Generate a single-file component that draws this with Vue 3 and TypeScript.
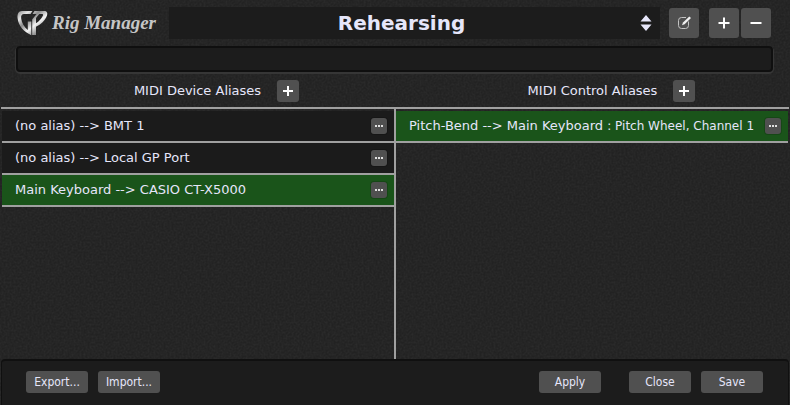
<script setup lang="ts">
import { ref } from 'vue'

interface Alias {
  id: number
  label: string
  detail?: string
}

const rigs: string[] = ['Rehearsing']
const rig = ref<string>('Rehearsing')
const notes = ref<string>('')

const devices = ref<Alias[]>([
  { id: 1, label: '(no alias) --> BMT 1' },
  { id: 2, label: '(no alias) --> Local GP Port' },
  { id: 3, label: 'Main Keyboard --> CASIO CT-X5000' },
])
const controls = ref<Alias[]>([
  { id: 1, label: 'Pitch-Bend --> Main Keyboard', detail: ': Pitch Wheel, Channel 1' },
])

const activeDevice = ref<number>(3)
const activeControl = ref<number>(1)
</script>

<template>
  <main class="window">
    <svg class="grain" aria-hidden="true">
      <filter id="grain">
        <feTurbulence type="fractalNoise" baseFrequency="0.5" numOctaves="2" seed="4" />
        <feColorMatrix type="matrix" values="0 0 0 0 1  0 0 0 0 1  0 0 0 0 1  0.08 0 0 0 -0.025" />
      </filter>
      <rect width="100%" height="100%" filter="url(#grain)" />
    </svg>

    <header class="top">
      <div class="brand">
        <svg class="logo" viewBox="0 0 31 26" aria-hidden="true">
          <defs>
            <linearGradient id="metal" x1="0" y1="0" x2="1" y2="1">
              <stop offset="0" stop-color="#8c8c8c" />
              <stop offset="0.2" stop-color="#e4e4e4" />
              <stop offset="0.38" stop-color="#8c8c8c" />
              <stop offset="0.58" stop-color="#f4f4f4" />
              <stop offset="0.78" stop-color="#8e8e8e" />
              <stop offset="1" stop-color="#c8c8c8" />
            </linearGradient>
          </defs>
          <path
            fill="url(#metal)"
            fill-rule="evenodd"
            d="M15.500 1H5C1.500 1 0 4 0.600 8.500C1.500 16 7 22 14.300 25.200V11.500H10.800V20C7 17 4.800 13 4.200 8.500C3.800 5.500 4.800 4 7 4H13.500ZM17.500 1H27C30 1 31 3 29.800 6C28 10.500 24 14.500 19 16.800V25H15.200V9.500L19.500 4H15.500ZM19 8V13.300C22 11.300 24.500 8.500 26 5.500C26.300 4.600 26 4 25 4H22.200Z"
          />
        </svg>
        <h1 class="name">Rig Manager</h1>
      </div>

      <div class="picker">
        <select v-model="rig" class="rig" aria-label="Rig">
          <option v-for="r in rigs" :key="r" :value="r">{{ r }}</option>
        </select>
        <svg class="arrows" viewBox="0 0 12 16" aria-hidden="true">
          <path d="M6 0L11.500 6.500H0.500ZM6 16L11.500 9.500H0.500Z" />
        </svg>
      </div>

      <button type="button" class="tool" aria-label="Rename rig">
        <svg viewBox="0 0 14 14" aria-hidden="true">
          <path class="thin" d="M9 1.500H4.500Q1.500 1.500 1.500 4.500V9.500Q1.500 12.500 4.500 12.500H8.500Q11.500 12.500 11.500 9.500V5.500" />
          <path class="pen" d="M5 9.200L6 6.600L12.300 0.500L14 2L7.600 8.200Z" />
        </svg>
      </button>
      <div class="pair">
        <button type="button" class="tool" aria-label="Add rig">
          <svg viewBox="0 0 14 14" aria-hidden="true"><path class="bold" d="M7 1.500V12.500M1.500 7H12.500" /></svg>
        </button>
        <button type="button" class="tool" aria-label="Remove rig">
          <svg viewBox="0 0 14 14" aria-hidden="true"><path class="bold" d="M1.500 7H12.500" /></svg>
        </button>
      </div>
    </header>

    <input v-model="notes" class="notes" type="text" aria-label="Rig notes" />

    <div class="heads">
      <div class="head">
        <h2>MIDI Device Aliases</h2>
        <button type="button" class="add" aria-label="Add device alias">
          <svg viewBox="0 0 12 12" aria-hidden="true"><path class="bold" d="M6 1V11M1 6H11" /></svg>
        </button>
      </div>
      <div class="head">
        <h2>MIDI Control Aliases</h2>
        <button type="button" class="add" aria-label="Add control alias">
          <svg viewBox="0 0 12 12" aria-hidden="true"><path class="bold" d="M6 1V11M1 6H11" /></svg>
        </button>
      </div>
    </div>

    <section class="lists">
      <ul class="list">
        <li
          v-for="d in devices"
          :key="d.id"
          class="row"
          :class="{ active: d.id === activeDevice }"
          @click="activeDevice = d.id"
        >
          <span class="label">{{ d.label }}</span>
          <button type="button" class="more" aria-label="Options">
            <svg viewBox="0 0 8 2" aria-hidden="true"><path d="M0 0H2V2H0ZM3 0H5V2H3ZM6 0H8V2H6Z" /></svg>
          </button>
        </li>
      </ul>
      <div class="divider"></div>
      <ul class="list">
        <li
          v-for="c in controls"
          :key="c.id"
          class="row"
          :class="{ active: c.id === activeControl }"
          @click="activeControl = c.id"
        >
          <span class="label">{{ c.label }} <span class="detail">{{ c.detail }}</span></span>
          <button type="button" class="more" aria-label="Options">
            <svg viewBox="0 0 8 2" aria-hidden="true"><path d="M0 0H2V2H0ZM3 0H5V2H3ZM6 0H8V2H6Z" /></svg>
          </button>
        </li>
      </ul>
    </section>

    <footer class="bottom">
      <button type="button" class="action">Export...</button>
      <button type="button" class="action">Import...</button>
      <button type="button" class="action apply">Apply</button>
      <button type="button" class="action close">Close</button>
      <button type="button" class="action">Save</button>
    </footer>
  </main>
</template>

<style>
body {
  background: #222;
}
</style>

<style scoped>
.window {
  position: relative;
  isolation: isolate;
  box-sizing: border-box;
  min-height: 100vh;
  display: flex;
  flex-direction: column;
  color: #e6e6fa;
  font: 13px/16px 'DejaVu Sans', Verdana, sans-serif;
}

.grain {
  position: absolute;
  inset: 0;
  z-index: -1;
  width: 100%;
  height: 100%;
}

h1,
h2,
ul {
  margin: 0;
  padding: 0;
}

button {
  display: flex;
  align-items: center;
  justify-content: center;
  padding: 0;
  border: 0;
  border-radius: 3px;
  background: #505050;
  color: inherit;
}

.top {
  display: flex;
  align-items: center;
  padding: 7px 19px 7px 17px;
}

.brand {
  display: flex;
  align-items: center;
  gap: 4px;
  width: 152px;
  flex: none;
}

.logo {
  width: 31px;
  height: 26px;
}

.name {
  color: #c6c6c6;
  font: italic bold 19px/26px 'Liberation Serif', serif;
  white-space: nowrap;
}

.picker {
  position: relative;
  flex: 1;
  margin-right: 9px;
}

.rig {
  display: block;
  width: 100%;
  height: 32px;
  padding: 0 26px 0 0;
  border: 0;
  appearance: none;
  background: #1c1c1c;
  color: #e6e6fa;
  font: bold 20px/32px 'DejaVu Sans', Verdana, sans-serif;
  text-align: center;
  text-align-last: center;
}

.arrows {
  position: absolute;
  top: 8px;
  right: 8px;
  width: 12px;
  height: 16px;
  fill: #e6e6fa;
  pointer-events: none;
}

.tool {
  width: 30px;
  height: 30px;
}

.tool svg {
  width: 14px;
  height: 14px;
}

.pair {
  display: flex;
  gap: 2px;
  margin-left: 10px;
}

.thin {
  fill: none;
  stroke: #c4c4c4;
  stroke-width: 1;
}

.pen {
  fill: #f0f0f0;
}

.bold {
  fill: none;
  stroke: #fff;
  stroke-width: 2;
}

.notes {
  box-sizing: border-box;
  height: 26px;
  margin: 0 17px 0 16px;
  padding: 0 8px;
  border: 2px solid #0f0f0f;
  border-radius: 4px;
  background: #1c1c1c;
  box-shadow: 0 1px 0 1px #363636;
  color: inherit;
  font: inherit;
}

.heads {
  display: grid;
  grid-template-columns: 1fr 1fr;
  gap: 2px;
  margin: 8px 1px 0;
  padding-bottom: 5px;
  border-bottom: 2px solid #a0a0a0;
}

.head {
  display: grid;
  grid-template-columns: 1fr auto 1fr;
  align-items: center;
}

.head h2 {
  grid-column: 2;
  font-size: 13px;
  font-weight: normal;
}

.add {
  width: 22px;
  height: 22px;
  margin-left: 16px;
}

.add svg {
  width: 12px;
  height: 12px;
}

.lists {
  flex: 1;
  display: grid;
  grid-template-columns: 1fr auto 1fr;
  margin: 0 2px;
}

.divider {
  width: 2px;
  background: #a0a0a0;
}

.list {
  padding-top: 2px;
  list-style: none;
}

.row {
  display: flex;
  align-items: center;
  height: 30px;
  padding: 0 7px 0 13px;
  border-bottom: 2px solid #a0a0a0;
  background: #1b1b1b;
}

.row.active {
  background: #1a541a;
}

.label {
  flex: 1;
  white-space: nowrap;
}

.detail {
  font-size: 12px;
}

.more {
  width: 16px;
  height: 16px;
  box-shadow: 0 0 0 1px #00000026;
}

.more svg {
  width: 8px;
  height: 2px;
  fill: #e0e0e0;
}

.bottom {
  display: flex;
  align-items: center;
  gap: 10px;
  height: 42px;
  margin: 0 1px;
  padding: 0 25px 2px 24px;
  border: solid #101010;
  border-width: 2px 1px 0;
  border-radius: 4px 4px 0 0;
  background: #1c1c1c;
}

.action {
  width: 62px;
  height: 22px;
  font: 12px/22px 'DejaVu Sans Condensed', 'DejaVu Sans', Tahoma, sans-serif;
}

.apply {
  margin-left: auto;
}

.close {
  margin-left: 18px;
}
</style>
